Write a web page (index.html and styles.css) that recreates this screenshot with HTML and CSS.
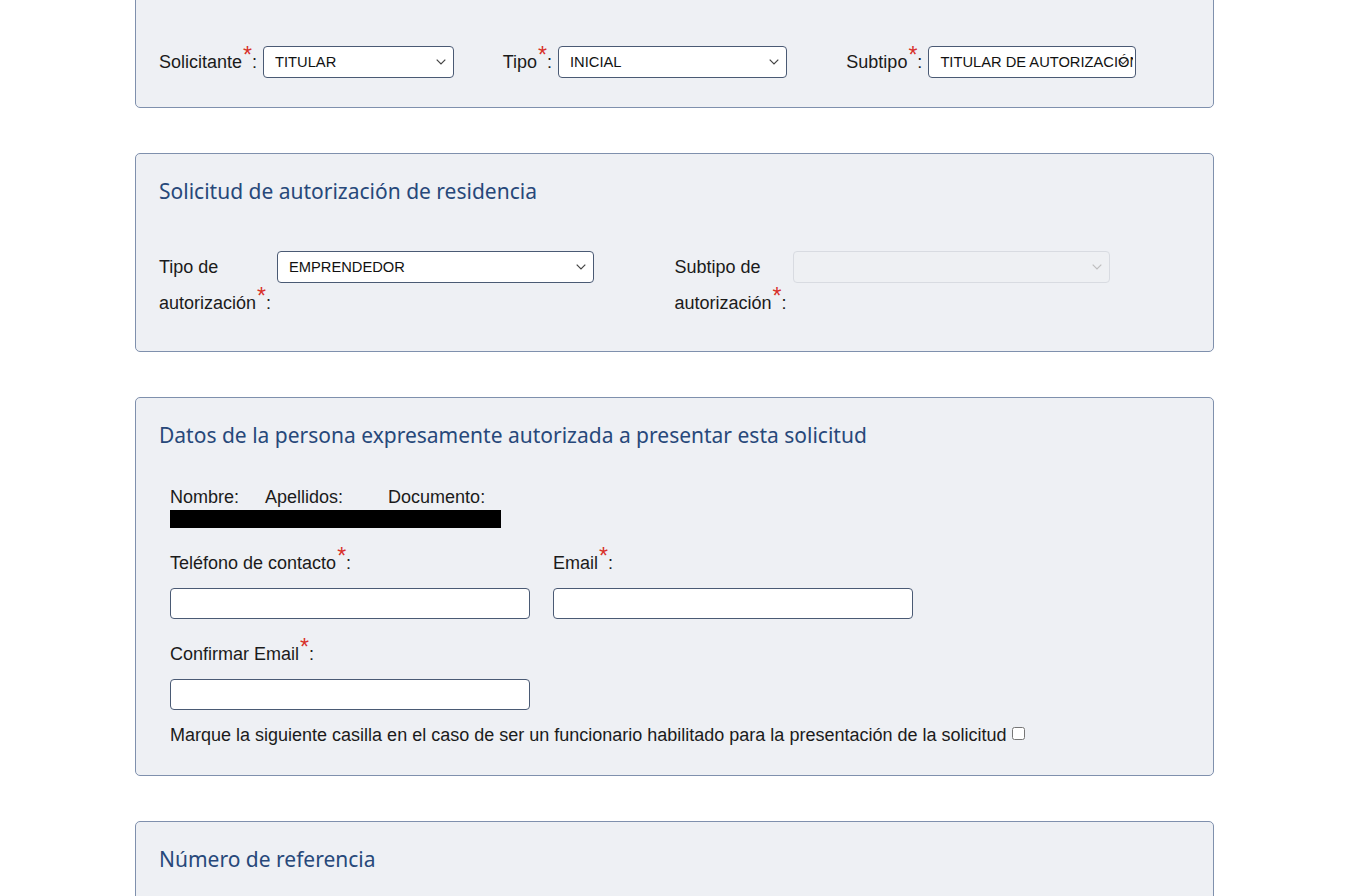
FILE: index.html
```html
<!DOCTYPE html>
<html lang="es">
<head>
    <meta charset="UTF-8">
    <meta name="viewport" content="width=device-width, initial-scale=1.0">
    <title>Solicitud de autorización</title>
    <link rel="stylesheet" href="styles.css">
</head>
<body>
    <div class="page">
        <div class="panel panel-first">
            <div class="row-three">
                <div class="field-inline">
                    <label for="solicitante">Solicitante<span class="req">*</span>:</label>
                    <select id="solicitante" class="sel-solicitante">
                        <option>TITULAR</option>
                    </select>
                </div>
                <div class="field-inline">
                    <label for="tipo">Tipo<span class="req">*</span>:</label>
                    <select id="tipo" class="sel-tipo">
                        <option>INICIAL</option>
                    </select>
                </div>
                <div class="field-inline">
                    <label for="subtipo">Subtipo<span class="req">*</span>:</label>
                    <select id="subtipo" class="sel-subtipo">
                        <option>TITULAR DE AUTORIZACIÓN</option>
                    </select>
                </div>
            </div>
        </div>

        <div class="panel panel-residencia">
            <h2>Solicitud de autorización de residencia</h2>
            <div class="row-two">
                <div class="field-wrap">
                    <label for="tipoAut">Tipo de autorización<span class="req">*</span>:</label>
                    <select id="tipoAut">
                        <option>EMPRENDEDOR</option>
                    </select>
                </div>
                <div class="field-wrap">
                    <label for="subtipoAut">Subtipo de autorización<span class="req">*</span>:</label>
                    <select id="subtipoAut" disabled>
                        <option></option>
                    </select>
                </div>
            </div>
        </div>

        <div class="panel panel-persona">
            <h2>Datos de la persona expresamente autorizada a presentar esta solicitud</h2>
            <div class="inner">
                <div class="ident">
                    <span>Nombre:</span>
                    <span>Apellidos:</span>
                    <span>Documento:</span>
                </div>
                <div class="redacted"></div>

                <div class="row-inputs">
                    <div class="field-stack">
                        <label for="telefono">Teléfono de contacto<span class="req">*</span>:</label>
                        <input type="text" id="telefono">
                    </div>
                    <div class="field-stack">
                        <label for="email">Email<span class="req">*</span>:</label>
                        <input type="text" id="email">
                    </div>
                </div>
                <div class="row-inputs">
                    <div class="field-stack">
                        <label for="email2">Confirmar Email<span class="req">*</span>:</label>
                        <input type="text" id="email2">
                    </div>
                </div>
                <p class="check-line">
                    Marque la siguiente casilla en el caso de ser un funcionario habilitado para la presentación de la solicitud
                    <input type="checkbox" id="funcionario">
                </p>
            </div>
        </div>

        <div class="panel panel-ref">
            <h2>Número de referencia</h2>
        </div>
    </div>
</body>
</html>
```

FILE: styles.css
```css
body {
    font-family: "Liberation Sans", Arial, sans-serif;
    font-size: 18px;
    color: #1b1b1b;
    background: #fff;
    margin: 0;
    padding: 0;
    overflow: hidden;
}

.page {
    width: 1079px;
    margin: -20px 0 0 135px;
}

.panel {
    background: #eef0f4;
    border: 1px solid #7f90ad;
    border-radius: 5px;
    padding: 0 23px;
    margin-bottom: 45px;
}

.panel h2 {
    font-family: "Noto Sans", "Open Sans", sans-serif;
    font-weight: 400;
    font-size: 21px;
    line-height: 30px;
    color: #27487a;
    margin: 0;
    padding-top: 22px;
}

.req {
    color: #d8312a;
    font-size: 23px;
    line-height: 0;
    vertical-align: 5px;
    margin-left: 1px;
}

select {
    -webkit-appearance: none;
    appearance: none;
    font-family: "Liberation Sans", Arial, sans-serif;
    font-size: 14.7px;
    color: #111;
    background: #fff url("data:image/svg+xml,%3Csvg xmlns='http://www.w3.org/2000/svg' width='10' height='6' viewBox='0 0 10 6'%3E%3Cpath d='M0.7 0.7 L5 5 L9.3 0.7' fill='none' stroke='%23444' stroke-width='1.2'/%3E%3C/svg%3E") no-repeat right 7px center;
    background-size: 10px 6px;
    border: 1px solid #4a5a74;
    border-radius: 4px;
    height: 32px;
    padding: 0 8px 0 11px;
}

select:disabled {
    background-color: #eff0f3;
    background-image: url("data:image/svg+xml,%3Csvg xmlns='http://www.w3.org/2000/svg' width='10' height='6' viewBox='0 0 10 6'%3E%3Cpath d='M0.7 0.7 L5 5 L9.3 0.7' fill='none' stroke='%23aaa' stroke-width='1.2'/%3E%3C/svg%3E");
    border-color: #cfd3da;
}

input[type="text"] {
    width: 360px;
    height: 31px;
    box-sizing: border-box;
    border: 1px solid #4a5a74;
    border-radius: 4px;
    background: #fff;
    padding: 0 6px;
    font-size: 14.7px;
}

/* first panel: three inline fields */
.panel-first {
    padding-top: 65px;
    padding-bottom: 29px;
}

.row-three {
    display: flex;
}

.field-inline {
    width: 344px;
    display: flex;
    align-items: center;
    gap: 6px;
}

.field-inline label {
    line-height: 32px;
}

.sel-solicitante { width: 191px; }
.sel-tipo { width: 229px; }
.sel-subtipo { width: 208px; padding-right: 2px; }

/* residencia panel */
.panel-residencia {
    padding-bottom: 30px;
}

.row-two {
    display: flex;
    margin-top: 45px;
}

.field-wrap {
    width: 516px;
    display: flex;
    align-items: flex-start;
}

.field-wrap label {
    width: 118px;
    line-height: 36px;
    margin-top: -2px;
}

.field-wrap select {
    width: 317px;
}

/* persona panel */
.panel-persona {
    padding-bottom: 30px;
}

.inner {
    padding-left: 11px;
}

.ident {
    display: flex;
    gap: 26px;
    margin-top: 37px;
    line-height: 20px;
}

.ident span:nth-child(3) {
    margin-left: 19px;
}

.redacted {
    width: 331px;
    height: 18px;
    background: #000;
    margin-top: 3px;
}

.row-inputs {
    display: flex;
    gap: 23px;
    margin-top: 25px;
}

.field-stack label {
    display: block;
    line-height: 20px;
    margin-bottom: 15px;
}

.check-line {
    margin: 15px 0 0;
    line-height: 20px;
}

.check-line input {
    margin: 0;
    width: 13px;
    height: 13px;
    vertical-align: 1px;
}

.panel-ref {
    padding-bottom: 60px;
}
```
